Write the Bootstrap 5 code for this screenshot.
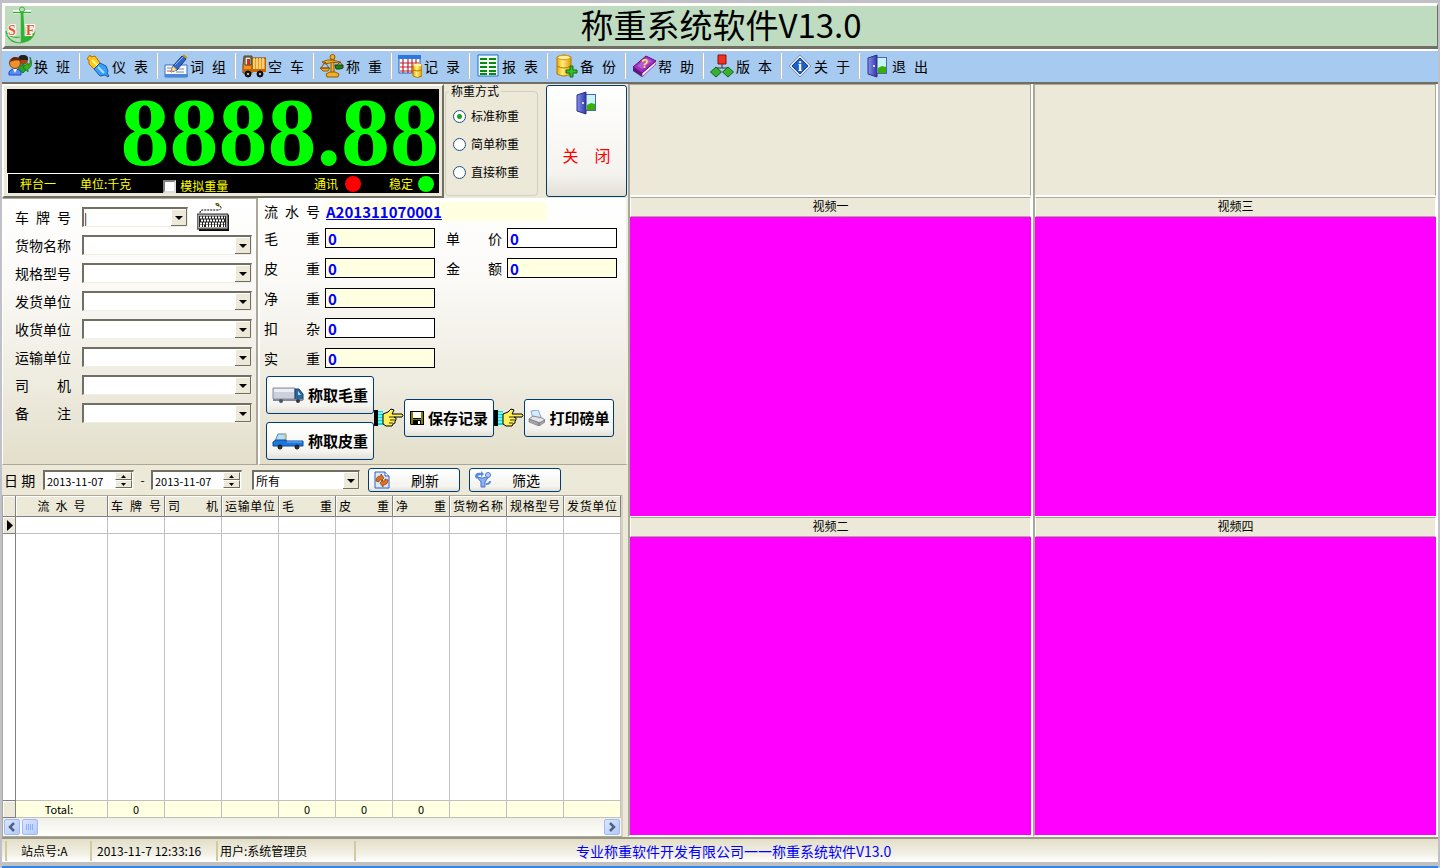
<!DOCTYPE html>
<html lang="zh-CN">
<head>
<meta charset="utf-8">
<meta name="viewport" content="width=device-width, initial-scale=1">
<title>称重系统软件V13.0</title>
<link rel="stylesheet" href="https://cdn.jsdelivr.net/npm/bootstrap@5.3.0/dist/css/bootstrap.min.css">
<style>
  :root { --face: #ece9d8; --shade: #aca899; --dark: #716f64; --navy: #003c74; --pale: #ffffe1; }
  body { font-family: "Noto Sans CJK SC", sans-serif; font-size: 12px; line-height: 16px; color: #000; background: var(--face); }
  .shell { border-top: 3px solid #c0c0c8; border-left: 2px solid #c0c0c8; border-right: 2px solid #c0c0c8; min-height: 620px; }
  button, input, select { font-family: inherit; color: #000; }

  /* title */
  .titlebar { height: 46px; background: #c0dcc0; border: 3px solid #fffff8; border-bottom: 3px solid var(--dark); border-right: 1px solid var(--dark); }
  .titlebar h1 { font-size: 33px; line-height: 36px; font-weight: 400; }
  .titlebar svg { width: 32px; height: 38px; }

  /* toolbar */
  .tools { height: 35px; background: #a6caf0; border-top: 2px solid #fff; border-bottom: 2px solid var(--dark); padding-bottom: 1px; }
  .tool { width: 78px; height: 26px; padding: 0 8px 0 6px; border: 0; border-right: 1px solid #fff; box-shadow: inset -1px 0 #c8c4b4; background: none; font-size: 14px; line-height: 24px; }
  .tool:last-child { border-right: 0; box-shadow: none; }
  .tool svg { width: 24px; height: 24px; flex: none; }
  .tool span { width: 36px; margin-left: 2px; }
  .spread { text-align: justify; text-align-last: justify; white-space: nowrap; }

  .leftside { flex: 0 0 626px; }
  /* display */
  .readout { width: 442px; height: 114px; border: 2px solid #fffff8; border-right-color: var(--dark); border-bottom-color: var(--dark); padding: 3px; }
  .screen { background: #000; color: #ff0; }
  .digits { height: 84px; font: bold 98px/86px "Liberation Serif", serif; color: #0f0; }
  .digits span { width: 49px; }
  .lights { height: 20px; border-top: 1px solid #fff; border-left: 1px solid #fff; padding: 0 5px 0 12px; font-size: 12px; line-height: 16px; }
  .lamp { width: 16px; height: 16px; border-radius: 50%; margin-left: 7px; }
  .lights input[type=checkbox] { width: 13px; height: 13px; margin: 2px 4px 0 0; border-radius: 0; border: 2px solid #808080; border-right-color: #ddd; border-bottom-color: #ddd; background: #fff; flex: none; }
  .modes { width: 93px; height: 112px; margin: 0 0 0 1px; border: 1px solid #d0d0bf; border-radius: 4px; padding: 0 7px; }
  .modes legend { float: none; width: auto; font-size: 12px; line-height: 14px; margin: 0 0 4px -4px; padding: 0 2px; background: var(--face); }
  .modes .form-check { min-height: 0; padding: 0; margin: 0; height: 28px; }
  .modes .form-check-input { float: none; width: 13px; height: 13px; margin: 0 5px 0 0; border: 1px solid #1c5180; background: #fff; flex: none; }
  .modes .form-check-input:checked { background: radial-gradient(circle, #21a121 0 2px, #fff 3px); }
  .xp { border: 1px solid var(--navy); border-radius: 3px; background: linear-gradient(#fff, #f4f3ee 80%, #e2dfd6); color: #000; padding: 0; font-size: 14px; line-height: 18px; }
  .xp:hover { background: #fff; color: #000; }
  .closer { width: 81px; height: 112px; margin: 1px 0 0 8px; color: #f00; font-size: 16px; }
  .closer:hover { color: #f00; }
  .closer svg { width: 24px; height: 24px; margin: 5px 0 31px; }
  .closer span { width: 48px; }

  /* forms */
  .formpane { background: linear-gradient(#fff, #fbfaf7 30%, #ece9dc 75%, #e3dfcb); height: 267px; }
  .cargo { width: 256px; padding: 4px 4px 0 12px; border: 1px solid var(--shade); border-left-color: #fff; border-right-width: 2px; }
  .cargo .line { height: 28px; }
  .lbl { width: 56px; font-size: 14px; line-height: 18px; flex: none; }
  .sunk { height: 20px; border: 2px solid var(--dark); border-right: 1px solid #f1efe2; border-bottom: 1px solid #f1efe2; border-radius: 0; background-color: #fff; font-size: 12px; line-height: 16px; padding: 0 2px; }
  .combo { appearance: none; background-image: url("data:image/svg+xml,%3Csvg xmlns='http://www.w3.org/2000/svg' width='16' height='17'%3E%3Cpath fill='%23ece9d8' d='M0 0h16v17H0z'/%3E%3Cpath fill='none' stroke='%23fff' d='M.5 16V.5H15'/%3E%3Cpath fill='none' stroke='%23716f64' d='M0 16.5h15.500V0'/%3E%3Cpath d='M4 7h8l-4 4z'/%3E%3C/svg%3E"); background-repeat: no-repeat; background-position: right 0 top 0; padding-right: 18px; }
  .cargo .combo { width: 170px; margin-left: 11px; }
  .cargo .plate { width: 106px; padding-left: 0; }
  .keys { width: 32px; height: 28px; margin-left: 9px; }
  .weights { flex: 1; padding: 0 8px 0 4px; border-left: 2px solid #fff; border-top: 1px solid #fff; border-right: 2px solid #f1efe2; border-bottom: 1px solid var(--shade); }
  .serial { height: 24px; }
  .serial a { width: 222px; margin-left: 5px; padding-left: 1px; background: var(--pale); color: #00f; font-size: 15px; line-height: 19px; font-weight: 700; }
  .weights .line { height: 30px; }
  .box { width: 110px; height: 20px; margin-left: 5px; padding: 0 2px; border: 1px solid #000; border-radius: 0; background: #fff; color: #00f; font-weight: 700; font-size: 15px; line-height: 18px; }
  .box[readonly] { background: var(--pale); }
  .second { margin-left: 11px; }
  .flow { margin: 3px 0 0 0; padding-left: 2px; }
  .flow .xp { height: 38px; font-weight: 700; font-size: 15px; }
  .flow .wide { width: 108px; }
  .flow .mid { width: 90px; }
  .hand { width: 30px; height: 20px; }

  /* filter */
  .filter { height: 30px; padding: 0 0 0 2px; }
  .filter label { font-size: 14px; }
  .spin { width: 91px; }
  .spin input { width: 68px; border: 0; padding: 0; font-size: 11px; line-height: 16px; outline: 0; background: none; }
  .spin button { display: block; width: 17px; height: 8px; padding: 0; border: 1px solid #fff; border-right-color: var(--dark); border-bottom-color: var(--dark); background: var(--face); }
  .spin svg { display: block; margin: auto; width: 5px; height: 3px; }
  .filter .xp { width: 92px; height: 24px; }
  .filter .combo { width: 108px; }
  .filter .xp svg { width: 18px; height: 18px; margin: 0 20px 0 4px; }

  /* records */
  .gridwrap { border: 1px solid var(--shade); border-right: 2px solid #d6d2c2; background: #fff; width: 621px; }
  .recs { table-layout: fixed; width: 618px; height: 100%; border-collapse: separate; border-spacing: 0; }
  .recs th, .recs td { padding: 0 3px; border-right: 1px solid #c0c0c0; border-bottom: 1px solid #c0c0c0; font-weight: 400; overflow: hidden; white-space: nowrap; }
  .recs thead th { height: 21px; background: var(--face); border-color: #808080; box-shadow: inset 1px 1px #fff; }
  .recs tbody tr:first-child td { height: 17px; line-height: 14px; }
  .recs tr > :first-child { width: 13px; padding: 0; background: var(--face); border-color: #808080; box-shadow: inset 1px 1px #fff; }
  .recs tbody tr.rest > :first-child { background: #fff; box-shadow: none; }
  .recs tfoot td { height: 17px; line-height: 16px; background: var(--pale); text-align: center; font-size: 11px; }
  .recs .serialno span { display: block; width: 48px; margin: auto; }
  .sbar { height: 18px; background: linear-gradient(#f1efe8, #fefefb); }
  .sbar button { width: 16px; height: 16px; border: 1px solid #9ebaf5; border-radius: 2px; background: linear-gradient(135deg, #dbe6fe, #b3c9f8); padding: 0; margin: 1px; }
  .sbar svg { display: block; width: 12px; height: 12px; margin: auto; }

  /* video */
  .cam { flex: 1 1 0; border-left: 2px solid var(--shade); border-right: 2px solid #fff; border-bottom: 2px solid #fff; }
  .blank { height: 112px; border: 1px solid var(--shade); border-left: 0; border-bottom-color: #fff; }
  .cap { height: 20px; line-height: 16px; border: 1px solid #fff; border-top-color: var(--shade); border-bottom-color: var(--shade); box-shadow: 0 -1px #fff; text-align: center; font-size: 12px; margin: 1px 0 0; font-weight: 400; }
  .view { background: #f0f; flex: 1 1 0; }

  /* status */
  .status { height: 31px; border-top: 2px solid #9a9789; border-bottom: 2px solid #2f86e6; background: linear-gradient(#e2dec8, #f4f2e8 60%, #fff 84%, #c0c0c0 85%); padding: 2px 3px 4px; }
  .status div { height: 20px; line-height: 20px; border-left: 2px solid #d0cca0; }
  .status .site { width: 85px; padding-left: 14px; }
  .status .clock { width: 126px; padding-left: 5px; }
  .status .user { width: 138px; padding-left: 2px; }
  .status .firm { color: #00f; font-size: 14px; flex: 1; padding-left: 220px; }
  @media (max-width: 1000px) { .workarea { flex-direction: column; } .cams { min-height: 600px; } }
</style>
</head>
<body>
<svg class="position-absolute" width="0" height="0" aria-hidden="true">
  <defs>
    <linearGradient id="gold"><stop stop-color="#f0a800"/><stop offset=".4" stop-color="#fff080"/><stop offset="1" stop-color="#e09a00"/></linearGradient>
    <linearGradient id="blu"><stop stop-color="#8890f0"/><stop offset="1" stop-color="#3038a8"/></linearGradient>
  </defs>
  <symbol id="door" viewBox="0 0 24 24"><path d="M8 3h13v17H8z" fill="#4a68b8"/><path d="M11 4h9v15h-9z" fill="#c8f4f8"/><path d="M12 14l4-2 4 1v6h-8z" fill="#38b000"/><path d="M2 4l9-3v22l-9-3z" fill="url(#blu)" stroke="#2a3088"/><circle cx="8" cy="12" r="1" fill="#fff"/></symbol>
  <symbol id="hand" viewBox="0 0 30 20"><path d="M0 2h4v16H0z" fill="#000"/><path d="M4 3h5v14H4z" fill="#0dd"/><path d="M4 5h5M4 8h5M4 11h5M4 14h5" stroke="#fff"/><path d="M9 6l5-2 3-3 3 1-2 4h10q2 1 0 3h-8l2 1v2l-1 1v2l-2 1-1 2h-6l-3-2z" fill="#ffef58" stroke="#000"/><path d="M15 9h5M16 12h5M15 15h4" stroke="#000" stroke-width=".8"/></symbol>
</svg>

<div class="shell vh-100 d-flex flex-column">
  <header class="titlebar position-relative flex-shrink-0">
    <svg class="position-absolute top-0 start-0" viewBox="0 0 32 38" aria-hidden="true"><path d="M8 6h18M17 8v28" stroke="#fff" stroke-width="4"/><g fill="none" stroke="#35b035"><circle cx="17" cy="3.500" r="2.500" fill="#c0dcc0"/><path d="M8 6.500h18" stroke-width="1.500"/></g><path d="M15.500 6h3l1 24c4 1 8-1 11-5-1 7-7 12-15 12z" fill="#35b035"/><path d="M2 29c3 7 9 8 14 8M2 27c3 4 8 5 13 4M2 29l-1-4" fill="none" stroke="#35b035" stroke-width="1.200"/><g font-family="Liberation Serif" font-weight="700" font-size="14" fill="#e8521c" stroke="#fff" stroke-width="2" paint-order="stroke"><text x="3" y="29">S</text><text x="21" y="29">F</text></g></svg>
    <h1 class="m-0 text-center">称重系统软件V13.0</h1>
  </header>

  <nav class="tools d-flex align-items-center flex-shrink-0" aria-label="工具栏">
    <button class="tool d-flex align-items-center"><svg viewBox="0 0 24 24"><circle cx="15" cy="6" r="5" fill="#a04a14"/><path d="M10 6q0-5 5-5 6 0 5 5z" fill="#222"/><path d="M10 16q0-6 6-5l3 4-4 4z" fill="#28a030" stroke="#084"/><circle cx="7" cy="9" r="5.500" fill="#ee9030" stroke="#843c08"/><path d="M2 8q1-5 6-5 5 1 5 4-6-2-11 1z" fill="#6b2808"/><path d="M1 21v-3q1-3 6-3t6 3v3z" fill="#5a8cf0" stroke="#2048c0"/><path d="M5 15h4l-2 4z" fill="#fff"/><path d="M15 13l5-4v2q3-1 2-8 4 9-2 12v3z" fill="#38b020" stroke="#167010" stroke-width=".7"/></svg><span class="spread">换 班</span></button>
    <button class="tool d-flex align-items-center"><svg viewBox="0 0 24 24"><path d="M4 1l1 2 4-1 5 7-6 6-5-5 0-4-2-1z" fill="#ffc818" stroke="#b86c00"/><path d="M6 6l6 6" stroke="#fff090" stroke-width="2"/><path d="M14 9l6 3 2 5-1 2 2 3-1 1-3-2-5 1-6-7z" fill="#38a0f8" stroke="#1858b0"/><path d="M12 13l6 6" stroke="#a8e4ff" stroke-width="2"/></svg><span class="spread">仪 表</span></button>
    <button class="tool d-flex align-items-center"><svg viewBox="0 0 24 24"><path d="M1 11h22v12H1z" fill="#f8fbff" stroke="#3870c0"/><path d="M1 20h23v3H1z" fill="#4c88d8"/><path d="M3 14h5M14 15h6M12 18h8" stroke="#789" /><path d="M3 17h4" stroke="#d44"/><path d="M7 18l2-6L18 2l4 3-9 11z" fill="#3468c8" stroke="#123a80"/><path d="M7 18l2-6 4 4z" fill="#ffd880"/><path d="M11 11l8-8" stroke="#8bc0ff"/><path d="M19 1l4 3" stroke="#d09010" stroke-width="2"/></svg><span class="spread">词 组</span></button>
    <button class="tool d-flex align-items-center"><svg viewBox="0 0 24 24"><path d="M9 4h15v12H9z" fill="#f09818" stroke="#704000"/><path d="M12 4v11M15 4v11M18 4v11M21 4v11" stroke="#ffe098" stroke-width="1.500"/><path d="M1 11l1-9h8v17H1z" fill="#f89018" stroke="#703800"/><path d="M3 3h6v8H3z" fill="#b8f8f8" stroke="#244"/><path d="M5 5h3v6H5z" fill="#e02818"/><path d="M1 15h23v3H1z" fill="#c86800"/><g fill="#181818" stroke="#000"><circle cx="6" cy="20" r="3"/><circle cx="18" cy="20" r="3"/></g><circle cx="6" cy="20" r="1" fill="#eee"/><circle cx="18" cy="20" r="1" fill="#eee"/></svg><span class="spread">空 车</span></button>
    <button class="tool d-flex align-items-center"><svg viewBox="0 0 24 24"><g fill="#f0b020" stroke="#885000" stroke-width=".9"><path d="M11 4h3v15h-3z"/><circle cx="12.500" cy="3" r="2.500"/><path d="M2 8q6-3 10-2t9 2l-1 1q-7-2-15 1z"/><path d="M6 20l4-2h5l4 2-1 3H7z"/><path d="M0 14h10l-2 3H3z"/></g><path d="M5 8l-4 6h8zM20 8l-4 4h7z" fill="none" stroke="#885000"/><path d="M15 11h8v3l-3 1h-4z" fill="#288018" stroke="#104808"/></svg><span class="spread">称 重</span></button>
    <button class="tool d-flex align-items-center"><svg viewBox="0 0 24 24"><path d="M1 2h21v17H1z" fill="#fff" stroke="#2060c0"/><path d="M0 1h23v4H0z" fill="#2878e8"/><path d="M5 5v14M10 5v14M14 5v14M18 5v8M2 9h19M2 13h19M2 17h14" stroke="#c02030" stroke-width="1.200"/><path d="M15 11q4.500-3 9 0v11q-4.500 3-9 0z" fill="url(#gold)" stroke="#b07800"/><ellipse cx="19.500" cy="11" rx="4" ry="1.500" fill="#fff4a0"/><path d="M15 16q4 2 9 0" fill="none" stroke="#b07800"/></svg><span class="spread">记 录</span></button>
    <button class="tool d-flex align-items-center"><svg viewBox="0 0 24 24"><path d="M2 1h20v21H2z" fill="#f4fff4" stroke="#1870d0"/><path d="M4 5h7M13 5h7M4 9h7M13 9h7M4 13h7M13 13h7M4 17h7M13 17h7M4 20h7M13 20h7" stroke="#0a8810" stroke-width="2"/></svg><span class="spread">报 表</span></button>
    <button class="tool d-flex align-items-center"><svg viewBox="0 0 24 24"><path d="M3 3q7-4 14 0v17q-7 4-14 0z" fill="url(#gold)" stroke="#b87800"/><ellipse cx="10" cy="3.500" rx="6.500" ry="2.200" fill="#fff098" stroke="#d09a10"/><path d="M3 12q7 4 14 0" fill="none" stroke="#b87800"/><path d="M16 12h3v4h4v3h-4v4h-3v-4h-4v-3h4z" fill="#35c028" stroke="#107010"/></svg><span class="spread">备 份</span></button>
    <button class="tool d-flex align-items-center"><svg viewBox="0 0 24 24"><path d="M1 13l9 6v4l-9-6z" fill="#5c1878"/><path d="M10 19L24 7v3L10 23z" fill="#f4e8f8" stroke="#803890" stroke-width=".8"/><path d="M1 13L14 2l10 5-14 12z" fill="#a030c0" stroke="#601080"/><path d="M5 12L14 4l6 3-10 8z" fill="#b858d8"/><text x="9" y="14" font-size="12" font-weight="700" fill="#ffe840" font-family="Liberation Sans">?</text></svg><span class="spread">帮 助</span></button>
    <button class="tool d-flex align-items-center"><svg viewBox="0 0 24 24"><path d="M12 9v5M6 17v-3h12v3" fill="none" stroke="#333"/><path d="M8 1h8v9H8z" fill="#f03020" stroke="#901008"/><path d="M6 13l5.500 5L6 23 .5 18zM18 13l5.500 5-5.500 5-5.500-5z" fill="#38b030" stroke="#106010"/></svg><span class="spread">版 本</span></button>
    <button class="tool d-flex align-items-center"><svg viewBox="0 0 24 24"><path d="M12 1l11 11-11 11L1 12z" fill="#dce4f4" stroke="#8494b8"/><path d="M12 4l8 8-8 8-8-8z" fill="#1c60c8" stroke="#103c90"/><text x="10" y="17" font-size="14" font-weight="700" fill="#fff" font-family="Liberation Serif">i</text></svg><span class="spread">关 于</span></button>
    <button class="tool d-flex align-items-center"><svg><use href="#door"/></svg><span class="spread">退 出</span></button>
  </nav>

  <main class="workarea d-flex flex-fill">
    <div class="leftside d-flex flex-column">
      <div class="d-flex">
        <section class="readout" aria-label="重量显示">
          <div class="screen">
            <div class="digits d-flex justify-content-end"><span>8</span><span>8</span><span>8</span><span>8</span><b class="d-block w-auto">.</b><span>8</span><span>8</span></div>
            <div class="lights d-flex align-items-center">
              <span>秤台一</span><span class="ms-4">单位:千克</span>
              <label class="d-flex ms-4 ps-2 pt-1"><input type="checkbox" class="form-check-input">模拟重量</label>
              <span class="ms-auto">通讯</span><i class="lamp" style="background:#f00"></i>
              <span class="ms-4 ps-1">稳定</span><i class="lamp" style="background:#0f0;margin-left:5px"></i>
            </div>
          </div>
        </section>
        <fieldset class="modes">
          <legend>称重方式</legend>
          <div class="form-check d-flex align-items-center"><input class="form-check-input" type="radio" name="mode" id="m1" checked><label for="m1">标准称重</label></div>
          <div class="form-check d-flex align-items-center"><input class="form-check-input" type="radio" name="mode" id="m2"><label for="m2">简单称重</label></div>
          <div class="form-check d-flex align-items-center"><input class="form-check-input" type="radio" name="mode" id="m3"><label for="m3">直接称重</label></div>
        </fieldset>
        <button class="btn xp closer d-flex flex-column align-items-center"><svg><use href="#door"/></svg><span class="spread">关 闭</span></button>
      </div>

      <div class="d-flex">
        <section class="formpane cargo" aria-label="货物信息">
          <div class="line d-flex align-items-center"><label class="lbl spread" for="c1">车 牌 号</label><input id="c1" class="sunk combo plate" value="|"><svg class="keys" viewBox="0 0 32 28" aria-hidden="true"><path d="M3 10q0-3 3-3h14q5 0 4-3l-4-2" fill="none" stroke="#000" stroke-dasharray="2 1"/><path d="M19 0l3 1v2l-3-1z" fill="#cc0" stroke="#000" stroke-width=".6"/><path d="M1 12h31v16H2z" fill="#000"/><path d="M0 11h31v15H0z" fill="#a8a8a8" stroke="#333"/><path d="M2 13h27v11H2z" fill="#222"/><path d="M3 14.500h25M4 17.500h24M3 20.500h25M3 23h4M9 23h13M24 23h4" stroke="#fff" stroke-width="2" stroke-dasharray="2 1"/></svg></div>
          <div class="line d-flex align-items-center"><label class="lbl" for="c2">货物名称</label><select id="c2" class="sunk combo"><option></option></select></div>
          <div class="line d-flex align-items-center"><label class="lbl" for="c3">规格型号</label><select id="c3" class="sunk combo"><option></option></select></div>
          <div class="line d-flex align-items-center"><label class="lbl" for="c4">发货单位</label><select id="c4" class="sunk combo"><option></option></select></div>
          <div class="line d-flex align-items-center"><label class="lbl" for="c5">收货单位</label><select id="c5" class="sunk combo"><option></option></select></div>
          <div class="line d-flex align-items-center"><label class="lbl" for="c6">运输单位</label><select id="c6" class="sunk combo"><option></option></select></div>
          <div class="line d-flex align-items-center"><label class="lbl spread" for="c7">司 机</label><select id="c7" class="sunk combo"><option></option></select></div>
          <div class="line d-flex align-items-center"><label class="lbl spread" for="c8">备 注</label><select id="c8" class="sunk combo"><option></option></select></div>
        </section>

        <section class="formpane weights" aria-label="称重数据">
          <div class="serial d-flex align-items-center"><span class="lbl spread">流 水 号</span><a href="#">A201311070001</a></div>
          <div class="line d-flex align-items-center"><label class="lbl spread" for="w1">毛 重</label><input id="w1" class="box" value="0" readonly><label class="lbl spread second" for="w6">单 价</label><input id="w6" class="box" value="0"></div>
          <div class="line d-flex align-items-center"><label class="lbl spread" for="w2">皮 重</label><input id="w2" class="box" value="0" readonly><label class="lbl spread second" for="w7">金 额</label><input id="w7" class="box" value="0" readonly></div>
          <div class="line d-flex align-items-center"><label class="lbl spread" for="w3">净 重</label><input id="w3" class="box" value="0" readonly></div>
          <div class="line d-flex align-items-center"><label class="lbl spread" for="w4">扣 杂</label><input id="w4" class="box" value="0"></div>
          <div class="line d-flex align-items-center"><label class="lbl spread" for="w5">实 重</label><input id="w5" class="box" value="0" readonly></div>
          <div class="flow d-flex align-items-center">
            <div class="d-flex flex-column gap-2">
              <button class="btn xp wide d-flex align-items-center justify-content-center gap-1"><svg width="32" height="18" viewBox="0 0 32 18"><path d="M1 2h22v11H1z" fill="#ccd0dc" stroke="#8c90a0"/><path d="M2 3h20v3H2z" fill="#eceef4"/><path d="M23 3h4l4 5v6h-8z" fill="#2868a0" stroke="#184468"/><path d="M26 5l3 4h-3z" fill="#b8dcf0"/><path d="M1 13h30v2H1z" fill="#889"/><circle cx="9" cy="15" r="2" fill="#3a5a70"/><circle cx="26" cy="15" r="2" fill="#334"/></svg>称取毛重</button>
              <button class="btn xp wide d-flex align-items-center justify-content-center gap-1"><svg width="32" height="18" viewBox="0 0 32 18"><path d="M3 9l3-7h8v8z" fill="#b8dcf4" stroke="#5888b0"/><path d="M13 1v8" stroke="#e8c060"/><path d="M1 10l3-2h10v1h17v5H1z" fill="#1878e0" stroke="#0c4890"/><path d="M15 10h15" stroke="#70b8ff"/><g fill="#333" stroke="#111"><circle cx="8" cy="15" r="2"/><circle cx="25" cy="15" r="2"/></g></svg>称取皮重</button>
            </div>
            <svg class="hand"><use href="#hand"/></svg>
            <button class="btn xp mid d-flex align-items-center justify-content-center gap-1"><svg width="14" height="14" viewBox="0 0 14 14"><path d="M0 0h14v14H1l-1-1z" fill="#000"/><path d="M1 1h2v7h8V1h2v12h-2v-4H3v4H1z" fill="#808000"/><path d="M3 1h8v6H3z" fill="#fff"/><path d="M8 10h2v3H8z" fill="#fff"/></svg>保存记录</button>
            <svg class="hand"><use href="#hand"/></svg>
            <button class="btn xp mid d-flex align-items-center justify-content-center gap-1"><svg width="17" height="16" viewBox="0 0 17 16"><path d="M3 1l7-1 3 7-8 2z" fill="#d8ecff" stroke="#78a8e0"/><path d="M1 9l4-3 9 2 3 2-5 3z" fill="#e4e4ea" stroke="#888"/><path d="M1 9l10 4v3L1 12zM11 13l6-3v2l-6 4z" fill="#a8a8b0" stroke="#777" stroke-width=".7"/></svg>打印磅单</button>
          </div>
        </section>
      </div>

      <div class="filter d-flex align-items-center flex-shrink-0">
        <label class="spread" style="width:29px" for="d1">日 期</label>
        <div class="sunk spin d-flex justify-content-between" style="margin-left:10px"><input id="d1" value="2013-11-07"><div><button aria-label="增加"><svg viewBox="0 0 5 3"><path d="M0 3h5L2.500 0z"/></svg></button><button aria-label="减少"><svg viewBox="0 0 5 3"><path d="M0 0h5L2.500 3z"/></svg></button></div></div>
        <span class="text-center" style="width:17px">-</span>
        <div class="sunk spin d-flex justify-content-between"><input aria-label="结束日期" value="2013-11-07"><div><button aria-label="增加"><svg viewBox="0 0 5 3"><path d="M0 3h5L2.500 0z"/></svg></button><button aria-label="减少"><svg viewBox="0 0 5 3"><path d="M0 0h5L2.500 3z"/></svg></button></div></div>
        <select class="sunk combo" style="margin:0 8px 0 10px" aria-label="范围"><option>所有</option></select>
        <button class="btn xp d-flex align-items-center"><svg viewBox="0 0 18 18"><path d="M2 1h10l4 4v12H2z" fill="#d8e8ff" stroke="#3060c0"/><path d="M12 1v4h4" fill="#fff" stroke="#3060c0"/><path d="M3 10q0-5 5-5V3l3 4-3 3V8q-2 0-2 3zM15 9q0 5-5 5v2l-3-4 3-3v2q2 0 2-3z" fill="#e87018" stroke="#8c3800" stroke-width=".7"/></svg>刷新</button>
        <button class="btn xp d-flex align-items-center" style="margin-left:9px"><svg viewBox="0 0 18 18"><path d="M2 5q6 4 13 0l-4 6v5H7v-5z" fill="#88b0f4" stroke="#4870d0"/><path d="M1 6q0-5 6-4V0l3 3-3 3V4Q3 4 3 8z" fill="#5888e8"/><circle cx="14" cy="4" r="2.500" fill="#b0ccff" stroke="#5078d8"/><path d="M12 13q4 0 4-3" stroke="#5888e8" stroke-width="2" fill="none"/></svg>筛选</button>
      </div>

      <div class="gridwrap d-flex flex-column flex-fill">
        <div class="flex-fill">
          <table class="recs">
            <colgroup><col style="width:13px"><col style="width:92px"><col span="9" style="width:57px"></colgroup>
            <thead><tr><th></th><th class="serialno spread"><span>流 水 号</span></th><th class="spread">车 牌 号</th><th class="spread">司 机</th><th class="spread">运输单位</th><th class="spread">毛 重</th><th class="spread">皮 重</th><th class="spread">净 重</th><th class="spread">货物名称</th><th class="spread">规格型号</th><th class="spread">发货单位</th></tr></thead>
            <tbody>
              <tr><td><svg class="d-block ms-1" width="6" height="11"><path d="M0 0v11l6-5.500z"/></svg></td><td></td><td></td><td></td><td></td><td></td><td></td><td></td><td></td><td></td><td></td></tr>
              <tr class="rest"><td></td><td></td><td></td><td></td><td></td><td></td><td></td><td></td><td></td><td></td><td></td></tr>
            </tbody>
            <tfoot><tr><td></td><td class="pe-2">Total:</td><td>0</td><td></td><td></td><td>0</td><td>0</td><td>0</td><td></td><td></td><td></td></tr></tfoot>
          </table>
        </div>
        <div class="sbar d-flex flex-shrink-0">
          <button aria-label="向左"><svg viewBox="0 0 12 12"><path d="M8 2L4 6l4 4" fill="none" stroke="#4d6185" stroke-width="2.500"/></svg></button>
          <button aria-label="滑块"><svg viewBox="0 0 12 12"><path d="M2.500 3v6M4.500 3v6M6.500 3v6M8.500 3v6" stroke="#8cb0f8"/></svg></button>
          <button class="ms-auto" aria-label="向右"><svg viewBox="0 0 12 12"><path d="M4 2l4 4-4 4" fill="none" stroke="#4d6185" stroke-width="2.500"/></svg></button>
        </div>
      </div>
    </div>

    <div class="cams d-flex flex-fill">
      <div class="cam d-flex flex-column"><div class="blank"></div><h2 class="cap">视频一</h2><div class="view"></div><h2 class="cap">视频二</h2><div class="view"></div></div>
      <div class="cam d-flex flex-column"><div class="blank"></div><h2 class="cap">视频三</h2><div class="view"></div><h2 class="cap">视频四</h2><div class="view"></div></div>
    </div>
  </main>

  <footer class="status d-flex flex-shrink-0">
    <div class="site">站点号:A</div>
    <div class="clock">2013-11-7 12:33:16</div>
    <div class="user">用户:系统管理员</div>
    <div class="firm">专业称重软件开发有限公司一一称重系统软件V13.0</div>
  </footer>
</div>
<script src="https://cdn.jsdelivr.net/npm/bootstrap@5.3.0/dist/js/bootstrap.bundle.min.js"></script>
</body>
</html>
